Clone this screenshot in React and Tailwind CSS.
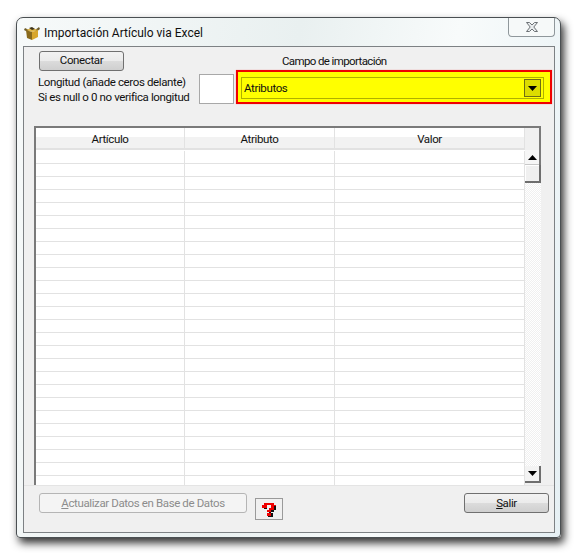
const FONT = "font-['Roboto','Liberation_Sans',Arial,sans-serif]";

function BoxIcon() {
  return (
    <svg width="16" height="16" viewBox="0 0 16 16">
      <path d="M1 3 L5 5 L4 7 L0 5 Z" fill="#6b5a2a" />
      <path d="M15 2 L11 5 L12 7 L16 4 Z" fill="#6b5a2a" />
      <path d="M2 5 L8 3 L14 5 L8 7 Z" fill="#e0b84a" />
      <path d="M2 5 L8 7 V15 L3 13 Z" fill="#8a6a1c" />
      <path d="M8 7 L14 5 V12 L8 15 Z" fill="#d8a62c" />
      <path d="M5 3 L8 2 L11 4 L8 5 Z" fill="#40351a" />
    </svg>
  );
}

function CloseIcon() {
  return (
    <svg width="14" height="12" viewBox="0 0 14 12">
      <path d="M1.5 1.5 H4.5 L7 4 L9.5 1.5 H12.5 L8.8 6 L12.5 10.5 H9.5 L7 8 L4.5 10.5 H1.5 L5.2 6 Z" fill="#e8ecee" stroke="#6d7276" strokeWidth="1" />
    </svg>
  );
}

function HelpIcon() {
  return (
    <svg width="16" height="16" viewBox="0 0 16 16" shapeRendering="crispEdges">
      <rect x="3" y="2" width="10" height="2" fill="#f00000" />
      <rect x="1" y="4" width="5" height="3" fill="#f00000" />
      <rect x="10" y="4" width="5" height="3" fill="#f00000" />
      <rect x="8" y="7" width="5" height="2" fill="#f00000" />
      <rect x="6" y="9" width="4" height="2" fill="#f00000" />
      <rect x="6" y="12" width="4" height="3" fill="#f00000" />
      <rect x="3" y="7" width="3" height="1" fill="#111" />
      <rect x="13" y="5" width="2" height="4" fill="#111" />
      <rect x="10" y="9" width="3" height="2" fill="#111" />
      <rect x="10" y="12" width="2" height="3" fill="#111" />
      <rect x="7" y="15" width="5" height="1" fill="#111" />
      <rect x="8" y="11" width="2" height="1" fill="#111" />
    </svg>
  );
}

function Tri({ down }) {
  return (
    <svg width="9" height="5" viewBox="0 0 9 5">
      <path d={down ? "M0 0 H9 L4.5 5 Z" : "M0 5 H9 L4.5 0 Z"} fill="#000" />
    </svg>
  );
}

const aeroBtn =
  "border border-[#707070] rounded-[3px] bg-[linear-gradient(#f2f2f2_0%,#ebebeb_48%,#dcdcdc_50%,#cfcfcf_100%)] text-[#111] flex items-center justify-center";

const COLS = [149, 150, 190];

export default function App() {
  const rows = Array.from({ length: 26 });
  return (
    <div className={`${FONT} w-[578px] h-[556px] bg-white pt-[17px] pl-[16px] overflow-hidden`}>
      <div className="w-[545px] h-[521px] rounded-t-[7px] rounded-b-[4px] border border-[#4a4f52] bg-[linear-gradient(100deg,#f7fafa_0%,#e9f0f0_45%,#f8fbfb_70%,#e6f0f4_100%)] shadow-[3px_5px_8px_#333333] flex flex-col">
        <div className="h-[28px] flex justify-between shrink-0">
          <div className="flex items-center pl-[7px] pt-[2px] gap-[4px] text-[12px] text-[#101010]">
            <BoxIcon />
            <span>Importación Artículo via Excel</span>
          </div>
          <div className="mr-[5px] w-[47px] h-[19px] border border-t-0 border-[#8f979b] rounded-b-[4px] bg-[#f6f9f9] flex items-center justify-center">
            <CloseIcon />
          </div>
        </div>

        <div className="ml-[6px] w-[532px] h-[487px] border border-[#7d8184] bg-[#f0f0f0] flex flex-col text-[#111] text-[11.5px] tracking-[-0.38px]">
          <div className="h-[79px] flex shrink-0">
            <div className="w-[175px] pl-[15px] pt-[4px] shrink-0">
              <div className={`${aeroBtn} w-[85px] h-[20px]`}>Conectar</div>
              <div className="-ml-[1px] mt-[4px] leading-[15px] whitespace-nowrap">
                <div>Longitud (añade ceros delante)</div>
                <div>Si es null o 0 no verifica longitud</div>
              </div>
            </div>
            <div className="mt-[27px] w-[35px] h-[30px] border border-[#a8a8a8] bg-white shrink-0" />
            <div className="ml-[2px] w-[316px] shrink-0">
              <div className="h-[23px] pl-[46px] pt-[7px] leading-[15px] tracking-[-0.62px]">Campo de importación</div>
              <div className="h-[34px] border-2 border-[#f00000] bg-[#ffff00] pl-[3px] pt-[5px] shadow-[0_0_1px_#ee8888]">
                <div className="w-[303px] h-[22px] border border-[#b0b000] bg-[#ffff00] flex items-center justify-between pl-[2px] pr-[2px]">
                  <span className="pt-[1px]">Atributos</span>
                  <div className="w-[17px] h-[18px] border border-[#6e6e14] bg-[#dcdc00] flex items-center justify-center">
                    <Tri down />
                  </div>
                </div>
              </div>
            </div>
          </div>

          <div className="ml-[10px] w-[507px] h-[359px] shrink-0 border-t-2 border-l-2 border-[#7a7a7a] flex bg-white overflow-hidden">
            <div className="w-[489px] shrink-0 flex flex-col">
              <div className="h-[22px] flex shrink-0 border-b-2 border-[#e2e2e2] bg-[linear-gradient(#ffffff_0%,#ffffff_45%,#f2f2f2_46%,#f2f2f2_100%)]">
                {["Artículo", "Atributo", "Valor"].map((h, i) => (
                  <div
                    key={h}
                    style={{ width: COLS[i] }}
                    className="shrink-0 border-r border-[#e2e2e2] pt-[4px] flex items-center justify-center leading-none"
                  >
                    {h}
                  </div>
                ))}
              </div>
              <div className="flex-1 overflow-hidden pt-[1px]">
                {rows.map((_, r) => (
                  <div key={r} className="h-[13px] flex">
                    {COLS.map((w, i) => (
                      <div key={i} style={{ width: w }} className="shrink-0 border-r border-b border-[#e2e2e2]" />
                    ))}
                  </div>
                ))}
              </div>
            </div>
            <div className="w-[16px] shrink-0 flex flex-col bg-[#f0f0f0]">
              <div className="h-[22px] shrink-0 bg-[#f0f0f0] border-r-2 border-[#7a7a7a]" />
              <div className="h-[15px] shrink-0 border-r-2 border-[#7a7a7a]">
                <div className="h-full bg-[#f6f6f6] border-b border-[#c8c8c8] flex items-center justify-center">
                  <Tri />
                </div>
              </div>
              <div className="h-[18px] shrink-0 border-r-2 border-b-2 border-[#6e6e6e]">
                <div className="h-full bg-[#f0f0f0] border-t border-l border-white" />
              </div>
              <div className="flex-1 bg-[repeating-conic-gradient(#f0f0f0_0_25%,#ffffff_0_50%)] bg-[length:2px_2px]" />
              <div className="h-[17px] shrink-0 bg-[#f3f3f3] border-r-2 border-b-2 border-[#6e6e6e] flex items-center justify-center">
                <Tri down />
              </div>
              <div className="h-[2px] shrink-0 bg-[#f0f0f0]" />
            </div>
          </div>

          <div className="flex-1 border-t border-[#e4e4e4] flex items-start pl-[15px] pt-[7px]">
            <div className="w-[208px] h-[20px] pt-[1px] border border-[#b5b5b5] rounded-[3px] bg-[#f4f4f4] text-[#8c8c8c] flex items-center justify-center">
              <span><span className="underline">A</span>ctualizar Datos en Base de Datos</span>
            </div>
            <div className="ml-[8px] mt-[5px] w-[28px] h-[22px] border border-[#9a9a9a] bg-[#f0f0f0] flex items-center justify-center">
              <HelpIcon />
            </div>
            <div className={`${aeroBtn} ml-[181px] w-[85px] h-[20px] pt-[1px]`}>
              <span><span className="underline">S</span>alir</span>
            </div>
          </div>
        </div>
      </div>
    </div>
  );
}
